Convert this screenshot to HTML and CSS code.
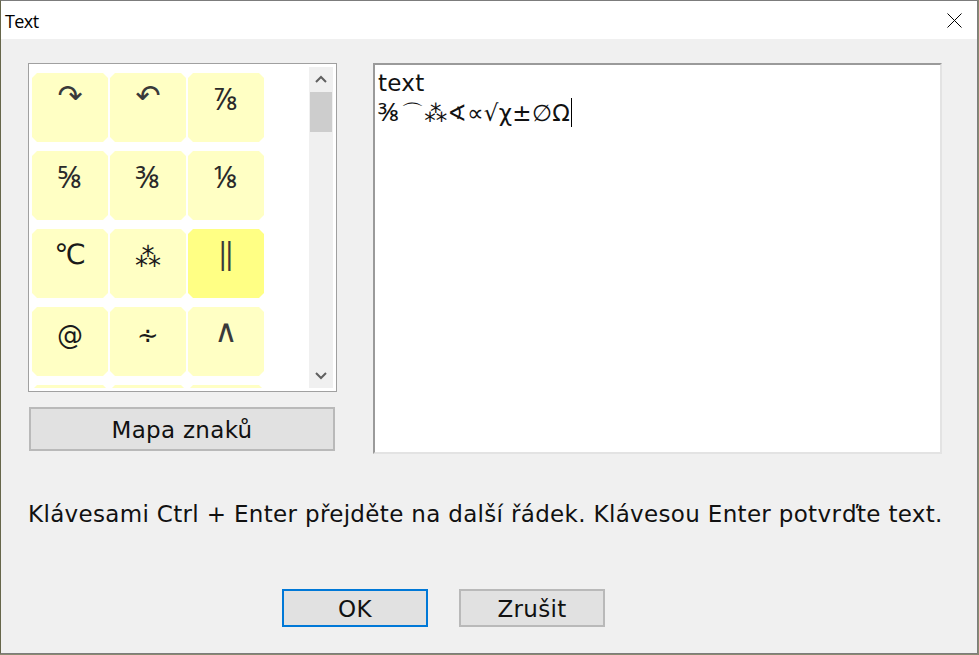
FILE: index.html
```html
<!DOCTYPE html>
<html lang="cs">
<head>
<meta charset="utf-8">
<title>Text</title>
<link rel="stylesheet" href="styles.css">
</head>
<body>
<div class="window">
  <div class="titlebar">
    <span class="title">Text</span>
    <svg class="close" width="15" height="15" viewBox="0 0 15 15"><path d="M0.5 0.5 L14.5 14.5 M14.5 0.5 L0.5 14.5" stroke="#000" stroke-width="1" fill="none"/></svg>
  </div>
  <div class="content">
    <div class="top-row">
      <div class="left-col">
        <div class="listbox">
          <div class="grid-area">
            <div class="grid">
              <div class="cell arrow">↷</div>
              <div class="cell arrow">↶</div>
              <div class="cell frac">⅞</div>
              <div class="cell frac">⅝</div>
              <div class="cell frac">⅜</div>
              <div class="cell frac">⅛</div>
              <div class="cell big">℃</div>
              <div class="cell">⁂</div>
              <div class="cell selected bar">‖</div>
              <div class="cell">@</div>
              <div class="cell">∻</div>
              <div class="cell thin">∧</div>
              <div class="cell"></div>
              <div class="cell"></div>
              <div class="cell"></div>
            </div>
          </div>
          <div class="scrollbar">
            <div class="sb-btn"><svg width="12" height="8" viewBox="0 0 12 8"><polyline points="1,7 6,2 11,7" fill="none" stroke="#606060" stroke-width="2"/></svg></div>
            <div class="sb-thumb"></div>
            <div class="sb-track"></div>
            <div class="sb-btn"><svg width="12" height="8" viewBox="0 0 12 8"><polyline points="1,1 6,6 11,1" fill="none" stroke="#606060" stroke-width="2"/></svg></div>
          </div>
        </div>
        <button class="btn wide">Mapa znaků</button>
      </div>
      <div class="textarea">
        <div class="line">text</div>
        <div class="line"><span class="tfrac">⅜</span>⌒⁂∢∝√χ±∅Ω<span class="caret"></span></div>
      </div>
    </div>
    <p class="hint">Klávesami Ctrl + Enter přejděte na další řádek. Klávesou Enter potvrďte text.</p>
    <div class="buttons">
      <button class="btn default">OK</button>
      <button class="btn">Zrušit</button>
    </div>
  </div>
</div>
</body>
</html>
```

FILE: styles.css
```css
html, body {
  margin: 0;
  padding: 0;
  background: #8a8a70;
}
body {
  width: 979px;
  height: 655px;
  overflow: hidden;
}
.window {
  width: 976px;
  height: 652px;
  border: 1px solid #7c7c7c;
  border-left-color: #66664a;
  background: #f0f0f0;
  display: flex;
  flex-direction: column;
  font-family: "DejaVu Sans", sans-serif;
  color: #111;
}
.titlebar {
  height: 38px;
  background: #fff;
  display: flex;
  align-items: center;
  justify-content: space-between;
  padding: 0 15px 0 4px;
}
.title {
  font-family: "Open Sans", sans-serif;
  font-size: 18px;
  letter-spacing: -0.6px;
  color: #000;
  margin-top: 1px;
}
.close {
  display: block;
  margin-top: 1px;
}
.content {
  flex: 1;
  padding: 24px 35px 0 27px;
  display: flex;
  flex-direction: column;
}
.top-row {
  display: flex;
  gap: 36px;
  height: 391px;
}
.left-col {
  width: 309px;
  display: flex;
  flex-direction: column;
}
.listbox {
  height: 329px;
  box-sizing: border-box;
  border: 1px solid #a0a0a0;
  background: #fff;
  padding: 3px;
  display: flex;
}
.grid-area {
  flex: 1;
  overflow: hidden;
  padding-top: 6px;
}
.grid {
  display: grid;
  grid-template-columns: repeat(3, 76px);
  grid-auto-rows: 69px;
  column-gap: 2px;
  row-gap: 9px;
}
.cell {
  background: #ffffc4;
  clip-path: polygon(5px 0, calc(100% - 5px) 0, 100% 5px, 100% calc(100% - 5px), calc(100% - 5px) 100%, 5px 100%, 0 calc(100% - 5px), 0 5px);
  text-align: center;
  font-size: 26px;
  line-height: 26px;
  padding-top: 15px;
  box-sizing: border-box;
  color: #1a1a1a;
}
.cell.frac {
  font-family: "Noto Sans", "Open Sans", "Lato", "Roboto", "Inter", "DejaVu Sans", sans-serif;
  font-size: 30px;
  line-height: 30px;
  padding-top: 11px;
  color: #2a2a2a;
}
.cell.arrow {
  font-size: 30px;
  padding-top: 10px;
  color: #3a3a3a;
}
.cell.big {
  font-size: 28px;
  padding-top: 13px;
}
.cell.bar {
  font-family: "Noto Sans", "Open Sans", "Lato", "Roboto", "DejaVu Sans", sans-serif;
  font-size: 30px;
  padding-top: 11px;
  color: #3a3a3a;
}
.cell.thin {
  font-size: 32px;
  padding-top: 11px;
  color: #3a3a3a;
}
.cell.selected {
  background: #ffff84;
}
.scrollbar {
  width: 24px;
  background: #f0f0f0;
  display: flex;
  flex-direction: column;
}
.sb-btn {
  height: 24px;
  display: flex;
  align-items: center;
  justify-content: center;
}
.sb-thumb {
  height: 40px;
  margin: 1px 1px 0;
  background: #cdcdcd;
}
.sb-track {
  flex: 1;
}
.btn {
  font-family: "DejaVu Sans", sans-serif;
  font-size: 23px;
  letter-spacing: 0.3px;
  color: #111;
  background: #e1e1e1;
  border: 2px solid #b9b9b9;
  padding: 0;
  margin: 0;
  box-sizing: border-box;
}
.btn.wide {
  margin: 15px 0 0 1px;
  width: 306px;
  height: 44px;
  padding-top: 1px;
}
.textarea {
  width: 569px;
  box-sizing: border-box;
  background: #fff;
  border-style: solid;
  border-width: 2px;
  border-color: #9a9a9a #e3e3e3 #e3e3e3 #9a9a9a;
  padding: 3px 3px;
  font-size: 23px;
  letter-spacing: 0.3px;
  line-height: 30px;
  color: #111;
}
.line {
  white-space: nowrap;
}
.tfrac {
  font-family: "Noto Sans", "Open Sans", "Lato", "Roboto", "Inter", "DejaVu Sans", sans-serif;
  font-size: 26px;
  line-height: 0;
  margin-right: 1px;
}
.caret {
  display: inline-block;
  width: 1px;
  height: 29px;
  background: #000;
  vertical-align: -6px;
  margin-left: 1px;
}
.hint {
  margin: 47px 0 0 0;
  font-size: 23px;
  letter-spacing: 0.33px;
  line-height: 26px;
  white-space: nowrap;
}
.buttons {
  display: flex;
  gap: 31px;
  margin-top: 62px;
  padding-left: 254px;
}
.buttons .btn {
  width: 146px;
  height: 38px;
  padding-top: 1px;
}
.buttons .btn.default {
  border-color: #0078d7;
}
```
